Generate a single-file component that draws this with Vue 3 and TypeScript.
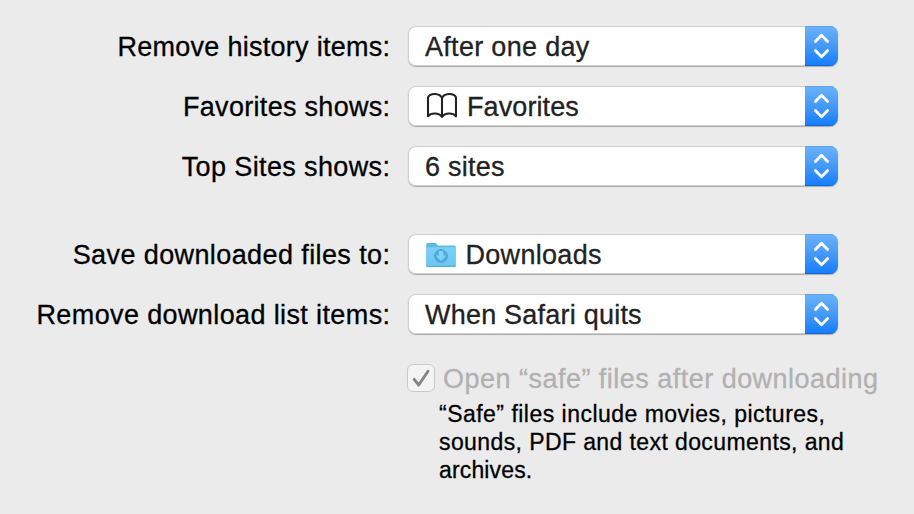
<script setup lang="ts">
import { ref } from 'vue'

interface Setting {
  label: string
  value: string
  icon?: 'book' | 'folder'
  labelTracking: number
  valueTracking: number
}

const groups = ref<Setting[][]>([
  [
    { label: 'Remove history items:', value: 'After one day', labelTracking: 0.28, valueTracking: 0.31 },
    { label: 'Favorites shows:', value: 'Favorites', icon: 'book', labelTracking: 0.3, valueTracking: 0.1 },
    { label: 'Top Sites shows:', value: '6 sites', labelTracking: 0.38, valueTracking: 0.25 },
  ],
  [
    { label: 'Save downloaded files to:', value: 'Downloads', icon: 'folder', labelTracking: 0.4, valueTracking: 0.3 },
    { label: 'Remove download list items:', value: 'When Safari quits', labelTracking: 0.38, valueTracking: 0.22 },
  ],
])

const hintLines = [
  { text: '“Safe” files include movies, pictures,', tracking: 0.48 },
  { text: 'sounds, PDF and text documents, and', tracking: 0.4 },
  { text: 'archives.', tracking: 0.15 },
]
</script>

<template>
  <main class="pane">
    <section v-for="(group, g) in groups" :key="g" class="group">
      <div v-for="row in group" :key="row.label" class="row">
        <span class="label"><span :style="{ letterSpacing: row.labelTracking + 'px' }">{{ row.label }}</span></span>
        <button class="popup" type="button">
          <span class="content">
            <svg v-if="row.icon === 'book'" class="book" viewBox="0 0 32 28" fill="none" stroke="#222" stroke-width="2.1" stroke-linejoin="round">
              <path d="M17 6C15 1 5 .5 3 5.5V24.3C6 20.5 14 20.5 17 25C20 20.5 28 20.5 31 24.3V5.5C29 .5 19 1 17 6ZM17 6V25" />
            </svg>
            <svg v-if="row.icon === 'folder'" class="folder" viewBox="0 0 30 26">
              <defs>
                <linearGradient id="folder-face" x1="0" y1="0" x2="0" y2="1">
                  <stop offset="0" stop-color="#7bd1f8" />
                  <stop offset="1" stop-color="#6ac5f1" />
                </linearGradient>
              </defs>
              <path d="M.3 24.5V2Q.3 1 1.3 1H9Q10 1 10.7 2L11.8 3.5H28.7Q29.7 3.5 29.7 4.5V24.5Z" fill="#62b9df" />
              <path d="M.3 5.2H29.7V23.7Q29.7 24.7 28.7 24.7H1.3Q.3 24.7.3 23.7Z" fill="url(#folder-face)" />
              <path d="M.7 24.4H29.3" stroke="#52a9d1" />
              <circle cx="15" cy="14" r="6.3" fill="#55addb" stroke="#489fc9" stroke-width="1" />
              <path d="M12.8 9H17.2V13.4H20.2L15 18.9L9.8 13.4H12.8Z" fill="#7dd3f9" />
            </svg>
            <span :style="{ letterSpacing: row.valueTracking + 'px' }">{{ row.value }}</span>
          </span>
          <span class="stepper">
            <svg viewBox="0 0 33 40" fill="none" stroke="#fff" stroke-width="2.8" stroke-linecap="round" stroke-linejoin="round">
              <path d="M10.4 15.4L16.5 9.2L22.6 15.4M10.4 24.6L16.5 30.8L22.6 24.6" />
            </svg>
          </span>
        </button>
      </div>
    </section>
    <section class="safe">
      <div class="option">
        <span class="checkbox" role="checkbox" aria-checked="true" aria-disabled="true">
          <svg viewBox="0 0 26 26" fill="none" stroke="#858585" stroke-width="2.9" stroke-linecap="round" stroke-linejoin="round">
            <path d="M6.2 14.4L10.7 20L20 6.3" />
          </svg>
        </span>
        <span class="option-text">Open “safe” files after downloading</span>
      </div>
      <p class="hint">
        <span v-for="line in hintLines" :key="line.text" :style="{ letterSpacing: line.tracking + 'px' }">{{ line.text }}</span>
      </p>
    </section>
  </main>
</template>

<style>
body {
  background: #ebebeb;
}
</style>

<style scoped>
.pane {
  box-sizing: border-box;
  width: 914px;
  height: 514px;
  padding-top: 26px;
  background: #ebebeb;
  color: #000;
  font: 27px/40px "Liberation Sans", Arial, sans-serif;
  -webkit-text-stroke: 0.3px;
  white-space: nowrap;
  overflow: hidden;
}
.group {
  display: flex;
  flex-direction: column;
  gap: 20px;
}
.group + .group {
  margin-top: 48px;
}
.row {
  display: grid;
  grid-template-columns: 390.4px 430px;
  column-gap: 17.6px;
  height: 40px;
}
.label {
  text-align: right;
  padding-top: 1px;
}
.popup {
  display: flex;
  width: 430px;
  height: 40px;
  padding: 0;
  border: 0;
  border-radius: 8px;
  background: #fff;
  box-shadow: 0 0 0 1px #cfcfcf inset, 0 1px 1px #aaa;
  color: #222;
  font: inherit;
  text-align: left;
  overflow: hidden;
}
.content {
  flex: 1;
  display: flex;
  align-items: center;
  height: 40px;
  padding: 1px 0 0 17px;
}
.book {
  width: 32px;
  height: 28px;
  margin: -3px 10px 0 0;
}
.folder {
  width: 30px;
  height: 26px;
  margin: -1px 9.5px 0 1px;
}
.stepper {
  width: 33px;
  height: 40px;
  background: linear-gradient(#6cb3fa, #4499f8 50%, #147cfb);
  box-shadow: 0 1px 0 #5ba0e8 inset, 0 -1px 0 #1269d8 inset;
}
.stepper svg {
  display: block;
  width: 33px;
  height: 40px;
}
.safe {
  margin: 30px 0 0 407px;
}
.option {
  display: flex;
  align-items: center;
  gap: 8px;
  height: 28px;
  color: #b1b1b1;
}
.checkbox {
  box-sizing: border-box;
  width: 28px;
  height: 28px;
  border: 1px solid #c9c9c9;
  border-radius: 6px;
  background: #f4f4f4;
}
.checkbox svg {
  display: block;
  width: 26px;
  height: 26px;
}
.option-text {
  padding-top: 2px;
  letter-spacing: 0.48px;
}
.hint {
  display: flex;
  flex-direction: column;
  margin: 8px 0 0 32px;
  font-size: 23px;
  line-height: 28px;
}
</style>
